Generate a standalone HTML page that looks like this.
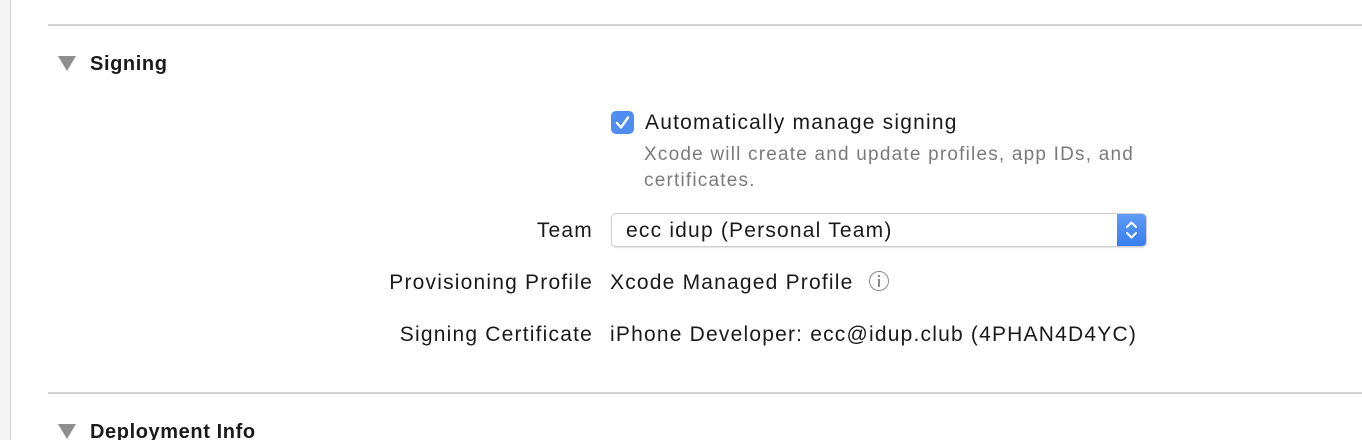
<!DOCTYPE html>
<html><head><style>
html,body{margin:0;padding:0;width:1362px;height:440px;overflow:hidden;background:#fff;position:relative;font-family:"Liberation Sans",sans-serif;color:#1a1a1a}
.a{position:absolute;white-space:nowrap;font-size:21px;letter-spacing:1.2px;line-height:24px}
.side{position:absolute;left:0;top:0;width:10px;height:440px;background:#f4f4f4;border-right:1px solid #d6d6d6}
.hr{position:absolute;left:48px;right:0;height:2px;background:#d4d4d4}
.tri{position:absolute;width:0;height:0;border-left:9px solid transparent;border-right:9px solid transparent;border-top:15px solid #8e8e8e}
.r{text-align:right;width:400px}
</style></head><body>
<div class="side"></div>
<div class="hr" style="top:24px"></div>
<div class="tri" style="left:58px;top:56px"></div>
<div class="a" style="left:90px;top:52px;font-weight:bold;font-size:20px;letter-spacing:0.6px">Signing</div>

<div style="position:absolute;left:611px;top:111px;width:23px;height:23px;border-radius:5px;background:#4f8ef0">
<svg width="23" height="23" viewBox="0 0 23 23" style="position:absolute;left:0;top:0"><path d="M6 12 L10 16.5 L17 6.5" fill="none" stroke="#fff" stroke-width="2.4" stroke-linecap="round" stroke-linejoin="round"/></svg></div>
<div class="a" style="left:645px;top:111px">Automatically manage signing</div>
<div class="a" style="left:644px;top:143px;color:#7b7b7b;font-size:19px">Xcode will create and update profiles, app IDs, and</div>
<div class="a" style="left:644px;top:169px;color:#7b7b7b;font-size:19px">certificates.</div>

<div class="a r" style="left:193px;top:219px">Team</div>
<div style="position:absolute;left:611px;top:213px;width:534px;height:32px;border:1px solid #cfcfcf;border-radius:5px;box-shadow:0 1px 1px rgba(0,0,0,0.12);overflow:hidden;background:#fff">
<div style="position:absolute;right:0;top:0;width:29px;height:32px;background:linear-gradient(#5d9bf6,#3a7ff0)">
<svg width="29" height="32" viewBox="0 0 29 32"><path d="M10 13 L14.5 8.5 L19 13 M10 19 L14.5 23.5 L19 19" fill="none" stroke="#fff" stroke-width="2" stroke-linecap="round" stroke-linejoin="round"/></svg></div></div>
<div class="a" style="left:626px;top:219px">ecc idup (Personal Team)</div>

<div class="a r" style="left:193px;top:271px">Provisioning Profile</div>
<div class="a" style="left:610px;top:271px">Xcode Managed Profile</div>
<div style="position:absolute;left:869px;top:271px;width:20px;height:20px;border:1.5px solid #8a8a8a;border-radius:50%;box-sizing:border-box"></div>
<div style="position:absolute;left:878px;top:275px;width:2px;height:2px;background:#8a8a8a"></div>
<div style="position:absolute;left:878px;top:279px;width:2px;height:8px;background:#8a8a8a"></div>

<div class="a r" style="left:193px;top:323px">Signing Certificate</div>
<div class="a" style="left:610px;top:323px">iPhone Developer: ecc@idup.club (4PHAN4D4YC)</div>

<div class="hr" style="top:392px"></div>
<div class="tri" style="left:58px;top:424px"></div>
<div class="a" style="left:90px;top:420px;font-weight:bold;font-size:20px;letter-spacing:0.6px">Deployment Info</div>
</body></html>
